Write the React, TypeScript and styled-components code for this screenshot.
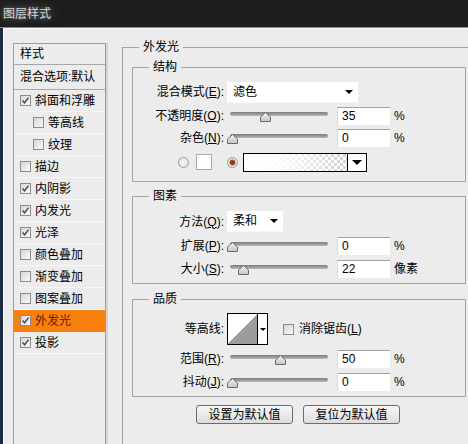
import React from 'react';
import styled, { createGlobalStyle } from 'styled-components';

const GlobalStyle = createGlobalStyle`
  html, body { margin: 0; padding: 0; background: #1e1e1e; }
  body {
    font-family: "Liberation Sans", "Noto Sans CJK SC", sans-serif;
    font-size: 12px;
    color: #000;
  }
`;

const Window = styled.div`
  width: 468px;
  height: 444px;
  overflow: hidden;
  display: flex;
  flex-direction: column;
  background: #1e1e1e;
`;

const TitleBar = styled.div`
  flex: none;
  height: 28px;
  display: flex;
  align-items: center;
  padding-left: 3px;
  border-bottom: 1px solid #8e8e8e;
  box-sizing: border-box;
`;

const TitleText = styled.span`
  color: #d6d6d6;
  font-size: 12px;
  line-height: 14px;
  text-shadow: 0 0 3px #666, 0 0 7px #5a5a5a, 0 0 12px #4a4a4a, 0 0 16px #3e3e3e;
`;

const Body = styled.div`
  flex: 1;
  display: flex;
  align-items: flex-start;
  background: #ececec;
  border-left: 3px solid #1b2946;
  box-shadow: inset 1px 1px 0 #fbfbfb;
  padding: 12px 0 0 10px;
  overflow: hidden;
`;

/* ---------- left list ---------- */

const StyleList = styled.div`
  flex: none;
  width: 93px;
  height: 420px;
  margin-top: 3px;
  box-sizing: border-box;
  border: 1px solid #9c9c9c;
  box-shadow: 2px 0 0 #d4d4d4;
  display: flex;
  flex-direction: column;
`;

const ListHead = styled.div<{ $h: number }>`
  height: ${p => p.$h}px;
  box-sizing: border-box;
  border-bottom: 1px solid #a8a8a8;
  padding-left: 6px;
  display: flex;
  align-items: center;
  line-height: 14px;
  white-space: nowrap;
`;

const ListItem = styled.div<{ $indent?: boolean; $active?: boolean }>`
  height: 22px;
  box-sizing: border-box;
  border-bottom: 1px solid ${p => (p.$active ? '#f8800f' : '#f6f6f6')};
  background: ${p => (p.$active ? '#f8800f' : 'transparent')};
  color: ${p => (p.$active ? '#6e1800' : '#000')};
  padding-left: ${p => (p.$indent ? 19 : 6)}px;
  display: flex;
  align-items: center;
  gap: 4px;
  line-height: 14px;
  white-space: nowrap;
`;

const CheckBox = styled.span`
  flex: none;
  width: 11px;
  height: 11px;
  box-sizing: border-box;
  border: 1px solid #8c8c8c;
  background: linear-gradient(135deg, #d6d6d6, #fafafa);
  display: flex;
  align-items: center;
  justify-content: center;
`;

function Check({ on }: { on?: boolean }) {
  return (
    <CheckBox>
      {on && (
        <svg width="9" height="9" viewBox="0 0 9 9">
          <path d="M1.5 4.5 L3.6 6.8 L7.6 1.6" fill="none" stroke="#5a4a40" strokeWidth="1.5" />
        </svg>
      )}
    </CheckBox>
  );
}

/* ---------- right side ---------- */

const RightCol = styled.div`
  flex: none;
  margin-left: 16px;
`;

const Group = styled.fieldset<{ $w: number; $pad: string; $mt?: number; $h?: number }>`
  margin: ${p => p.$mt ?? 0}px 0 0 0;
  padding: ${p => p.$pad};
  width: ${p => p.$w}px;
  ${p => (p.$h ? `height: ${p.$h}px;` : '')}
  min-width: 0;
  box-sizing: border-box;
  border: 1px solid #a3a3a3;
`;

const Legend = styled.legend<{ $ml: number }>`
  margin-left: ${p => p.$ml}px;
  padding: 0 4px;
  font-size: 12px;
  line-height: 14px;
`;

const FieldRow = styled.div<{ $h: number; $mt?: number }>`
  display: flex;
  align-items: center;
  height: ${p => p.$h}px;
  margin-top: ${p => p.$mt ?? 0}px;
`;

const Label = styled.span`
  flex: none;
  width: 91px;
  margin-right: 3px;
  text-align: right;
  white-space: nowrap;
  line-height: 14px;
`;

const Select = styled.div<{ $w: number }>`
  flex: none;
  width: ${p => p.$w}px;
  height: 21px;
  box-sizing: border-box;
  background: #fff;
  border-bottom: 1px solid #f6f6f6;
  padding: 0 5px 0 6px;
  display: flex;
  align-items: center;
  justify-content: space-between;
  line-height: 14px;
`;

const Arrow = styled.span<{ $s?: number }>`
  width: 0;
  height: 0;
  border-left: ${p => p.$s ?? 4}px solid transparent;
  border-right: ${p => p.$s ?? 4}px solid transparent;
  border-top: ${p => p.$s ?? 4}px solid #000;
`;

const SliderBox = styled.div`
  position: relative;
  flex: none;
  width: 98px;
  height: 12px;
  margin-left: 3px;
`;

const Track = styled.div`
  position: absolute;
  left: 0;
  right: 0;
  top: 2px;
  height: 4px;
  border-radius: 2px;
  background: linear-gradient(#7a7a7a, #b8b8b8);
`;

const KnobSvg = styled.svg`
  position: absolute;
  top: 2px;
`;

function Slider({ frac }: { frac: number }) {
  const left = 2 + frac * 96 - 5.5;
  return (
    <SliderBox>
      <Track />
      <KnobSvg width="11" height="10" viewBox="0 0 11 10" style={{ left }}>
        <defs>
          <linearGradient id="kg" x1="0" y1="0" x2="0" y2="1">
            <stop offset="0" stopColor="#f4f4f4" />
            <stop offset="1" stopColor="#c4c4c4" />
          </linearGradient>
        </defs>
        <polygon points="5.5,0.5 10.5,5 10.5,9.5 0.5,9.5 0.5,5" fill="url(#kg)" stroke="#6a6a6a" />
      </KnobSvg>
    </SliderBox>
  );
}

const NumBox = styled.div`
  flex: none;
  width: 53px;
  height: 18px;
  margin-left: 9px;
  box-sizing: border-box;
  background: #fff;
  border-top: 1px solid #a2a2a2;
  border-left: 1px solid #d8d8d8;
  padding-left: 4px;
  line-height: 17px;
  font-size: 12px;
`;

const Unit = styled.span`
  margin-left: 4px;
  line-height: 14px;
`;

const ColorRow = styled.div`
  display: flex;
  align-items: center;
  height: 20px;
  margin-top: 5px;
  padding-left: 45px;
`;

const Radio = styled.span<{ $on?: boolean; $ml?: number }>`
  flex: none;
  width: 11px;
  height: 11px;
  margin-left: ${p => p.$ml ?? 0}px;
  box-sizing: border-box;
  border-radius: 50%;
  border: 1px solid #9a9a9a;
  background: ${p =>
    p.$on
      ? 'radial-gradient(circle, #7a2e10 0, #a4522a 2.5px, #e6e6e6 3.5px, #fafafa 100%)'
      : 'radial-gradient(circle, #f8f8f8 0, #dcdcdc 100%)'};
`;

const Swatch = styled.span`
  flex: none;
  width: 16px;
  height: 16px;
  margin-left: 7px;
  box-sizing: border-box;
  background: #fff;
  border: 1px solid #a8a8a8;
`;

const GradientBox = styled.div`
  flex: none;
  display: flex;
  width: 124px;
  height: 19px;
  margin-left: 5px;
  box-sizing: border-box;
  border: 1px solid #000;
`;

const GradientFill = styled.div`
  flex: 1;
  background:
    linear-gradient(to right, #fff 0%, rgba(255, 255, 255, 0.9) 35%, rgba(255, 255, 255, 0) 100%),
    repeating-conic-gradient(#d2d2d2 0 25%, #fff 0 50%) 0 0 / 6px 6px;
`;

const DropPart = styled.div<{ $w: number }>`
  flex: none;
  width: ${p => p.$w}px;
  border-left: 1px solid #000;
  background: #fff;
  display: flex;
  align-items: center;
  justify-content: center;
`;

const ContourBox = styled.div`
  flex: none;
  display: flex;
  width: 41px;
  height: 32px;
  box-sizing: border-box;
  border: 1px solid #000;
`;

const ContourCurve = styled.div`
  flex: 1;
  background: linear-gradient(to top left, #9c9c9c 50%, #fff 50%);
`;

const CheckWrap = styled.span`
  margin-left: 15px;
  display: flex;
`;

const CheckLabel = styled.span`
  margin-left: 5px;
  line-height: 14px;
  white-space: nowrap;
`;

const ButtonRow = styled.div`
  display: flex;
  gap: 10px;
  margin-top: 8px;
  padding-left: 64px;
`;

const Button = styled.button`
  width: 97px;
  height: 19px;
  padding: 0;
  box-sizing: border-box;
  border: 1px solid #6c6c6c;
  border-radius: 3px;
  background: linear-gradient(#f8f8f8, #dcdcdc);
  font-family: inherit;
  font-size: 12px;
  line-height: 14px;
  color: #000;
`;

const listItems: { name: string; on: boolean; indent?: boolean; active?: boolean }[] = [
  { name: '斜面和浮雕', on: true },
  { name: '等高线', on: false, indent: true },
  { name: '纹理', on: false, indent: true },
  { name: '描边', on: false },
  { name: '内阴影', on: true },
  { name: '内发光', on: true },
  { name: '光泽', on: true },
  { name: '颜色叠加', on: false },
  { name: '渐变叠加', on: false },
  { name: '图案叠加', on: false },
  { name: '外发光', on: true, active: true },
  { name: '投影', on: true },
];

function SliderRow(props: { label: React.ReactNode; frac: number; value: string; unit: string; mt: number }) {
  return (
    <FieldRow $h={19} $mt={props.mt}>
      <Label>{props.label}</Label>
      <Slider frac={props.frac} />
      <NumBox>{props.value}</NumBox>
      <Unit>{props.unit}</Unit>
    </FieldRow>
  );
}

export default function App() {
  return (
    <Window>
      <GlobalStyle />
      <TitleBar>
        <TitleText>图层样式</TitleText>
      </TitleBar>
      <Body>
        <StyleList>
          <ListHead $h={21}>样式</ListHead>
          <ListHead $h={25}>混合选项:默认</ListHead>
          {listItems.map(it => (
            <ListItem key={it.name} $indent={it.indent} $active={it.active}>
              <Check on={it.on} />
              {it.name}
            </ListItem>
          ))}
        </StyleList>

        <RightCol>
          <Group $w={360} $h={420} $pad="6px 0 0 9px">
            <Legend $ml={7}>外发光</Legend>

            <Group $w={334} $pad="7px 0 9px 0">
              <Legend $ml={16}>结构</Legend>
              <FieldRow $h={22}>
                <Label>混合模式(<u>E</u>):</Label>
                <Select $w={131}>
                  滤色
                  <Arrow />
                </Select>
              </FieldRow>
              <SliderRow label={<>不透明度(<u>O</u>):</>} frac={0.35} value="35" unit="%" mt={3} />
              <SliderRow label={<>杂色(<u>N</u>):</>} frac={0} value="0" unit="%" mt={3} />
              <ColorRow>
                <Radio />
                <Swatch />
                <Radio $on $ml={15} />
                <GradientBox>
                  <GradientFill />
                  <DropPart $w={18}>
                    <Arrow $s={5} />
                  </DropPart>
                </GradientBox>
              </ColorRow>
            </Group>

            <Group $w={334} $pad="8px 0 5px 0" $mt={7}>
              <Legend $ml={16}>图素</Legend>
              <FieldRow $h={21}>
                <Label>方法(<u>Q</u>):</Label>
                <Select $w={56}>
                  柔和
                  <Arrow />
                </Select>
              </FieldRow>
              <SliderRow label={<>扩展(<u>P</u>):</>} frac={0} value="0" unit="%" mt={4} />
              <SliderRow label={<>大小(<u>S</u>):</>} frac={0.12} value="22" unit="像素" mt={4} />
            </Group>

            <Group $w={334} $pad="7px 0 5px 0" $mt={8}>
              <Legend $ml={16}>品质</Legend>
              <FieldRow $h={32}>
                <Label>等高线:</Label>
                <ContourBox>
                  <ContourCurve />
                  <DropPart $w={9}>
                    <Arrow $s={3} />
                  </DropPart>
                </ContourBox>
                <CheckWrap>
                  <Check />
                </CheckWrap>
                <CheckLabel>消除锯齿(<u>L</u>)</CheckLabel>
              </FieldRow>
              <SliderRow label={<>范围(<u>R</u>):</>} frac={0.5} value="50" unit="%" mt={4} />
              <SliderRow label={<>抖动(<u>J</u>):</>} frac={0} value="0" unit="%" mt={4} />
            </Group>

            <ButtonRow>
              <Button>设置为默认值</Button>
              <Button>复位为默认值</Button>
            </ButtonRow>
          </Group>
        </RightCol>
      </Body>
    </Window>
  );
}
